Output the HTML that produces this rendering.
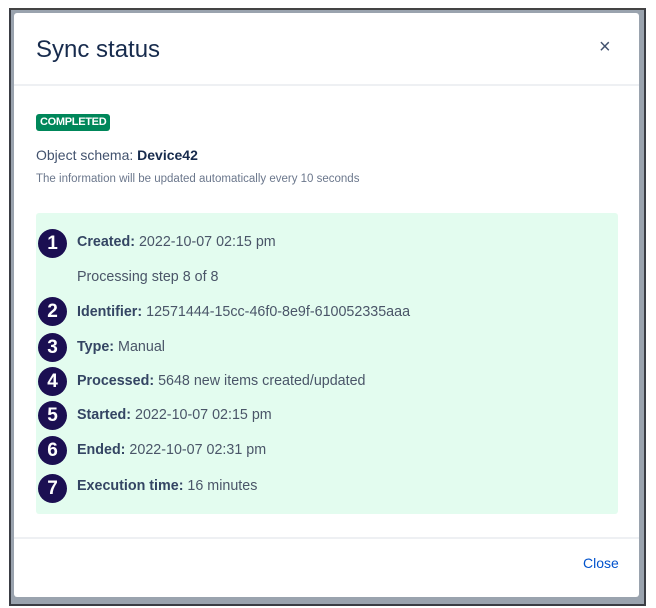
<!DOCTYPE html>
<html><head><meta charset="utf-8"><style>
*{margin:0;padding:0;box-sizing:border-box}
body{width:656px;height:608px;background:#fff;position:relative;overflow:hidden;font-family:"Liberation Sans",sans-serif;color:#42526e}
.frame{position:absolute;left:9px;top:8px;width:637px;height:598px;background:#9aa3ae;border:2px solid #3a3d44;border-top-color:#444;}
.modal{position:absolute;left:14px;top:13px;width:625px;height:584px;background:#fff;border-radius:3px}
.t{position:absolute;white-space:nowrap}
.c{position:absolute;width:29px;height:29px;border-radius:50%;background:#1b0f52;color:#fff;font-weight:bold;font-size:19px;text-align:center;line-height:29px;left:38px}
.r{position:absolute;left:77px;font-size:14.3px;color:#4a5568;white-space:nowrap}
.r b{color:#344563}
</style></head><body>
<div class="frame"></div>
<div class="modal"></div>
<div class="t" style="left:36px;top:36px;font-size:24px;color:#172b4d">Sync status</div>
<div class="t" style="left:599px;top:36px;font-size:20px;color:#42526e">×</div>
<div style="position:absolute;left:14px;top:84px;width:625px;height:2px;background:#eef0f3"></div>
<div class="t" style="left:36px;top:114px;height:17px;padding:0 4px;background:#00875a;color:#fff;font-size:11px;font-weight:bold;line-height:17px;border-radius:3px;letter-spacing:-0.3px">COMPLETED</div>
<div class="t" style="left:36px;top:147px;font-size:14px;color:#42526e">Object schema: <b style="color:#172b4d">Device42</b></div>
<div class="t" style="left:36px;top:173px;font-size:11.5px;color:#6b778c">The information will be updated automatically every 10 seconds</div>
<div style="position:absolute;left:36px;top:213px;width:582px;height:301px;background:#e3fcef;border-radius:3px"></div>
<div class="c" style="top:229px">1</div>
<div class="r" style="top:234px"><b>Created:</b> 2022-10-07 02:15 pm</div>
<div class="r" style="top:269px">Processing step 8 of 8</div>
<div class="c" style="top:297px">2</div>
<div class="r" style="top:304px"><b>Identifier:</b> 12571444-15cc-46f0-8e9f-610052335aaa</div>
<div class="c" style="top:333px">3</div>
<div class="r" style="top:339px"><b>Type:</b> Manual</div>
<div class="c" style="top:367px">4</div>
<div class="r" style="top:373px"><b>Processed:</b> 5648 new items created/updated</div>
<div class="c" style="top:401px">5</div>
<div class="r" style="top:407px"><b>Started:</b> 2022-10-07 02:15 pm</div>
<div class="c" style="top:436px">6</div>
<div class="r" style="top:442px"><b>Ended:</b> 2022-10-07 02:31 pm</div>
<div class="c" style="top:474px">7</div>
<div class="r" style="top:478px"><b>Execution time:</b> 16 minutes</div>
<div style="position:absolute;left:14px;top:537px;width:625px;height:2px;background:#eef0f3"></div>
<div class="t" style="left:583px;top:555px;font-size:14px;color:#0052cc">Close</div>
</body></html>
